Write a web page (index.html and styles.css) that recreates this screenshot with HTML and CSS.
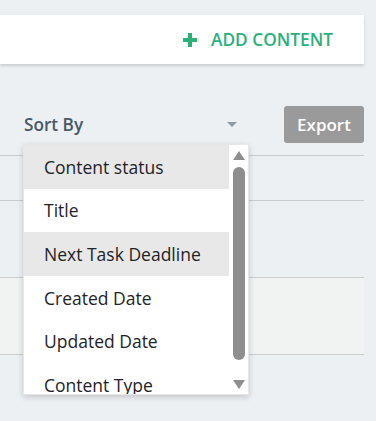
FILE: index.html
```html
<!DOCTYPE html>
<html lang="en">
<head>
    <meta charset="UTF-8">
    <meta name="viewport" content="width=device-width, initial-scale=1.0">
    <title>Content</title>
    <link rel="stylesheet" href="styles.css">
</head>
<body>
    <div class="page">
        <div class="toolbar">
            <a class="add-btn">
                <svg class="plus" width="14" height="14" viewBox="0 0 14 14">
                    <path d="M5 0h4v5h5v4H9v5H5V9H0V5h5z" fill="#2bb07c"/>
                </svg>
                <span>ADD CONTENT</span>
            </a>
        </div>

        <div class="list-area">
            <div class="filter-row">
                <div class="sort-select">
                    <span>Sort By</span>
                    <span class="caret"></span>
                </div>
                <button class="export-btn">Export</button>
            </div>

            <div class="table">
                <div class="row row-short"></div>
                <div class="row"></div>
                <div class="row row-alt"></div>
            </div>

            <!-- dropdown terbuka -->
            <div class="dropdown">
                <ul class="options">
                    <li class="hover">Content status</li>
                    <li>Title</li>
                    <li class="hover">Next Task Deadline</li>
                    <li>Created Date</li>
                    <li>Updated Date</li>
                    <li>Content Type</li>
                </ul>
                <div class="scrollbar">
                    <span class="arrow-up"></span>
                    <span class="thumb"></span>
                    <span class="arrow-down"></span>
                </div>
            </div>
        </div>
    </div>
</body>
</html>
```

FILE: styles.css
```css
* {
    margin: 0;
    padding: 0;
    box-sizing: border-box;
    font-family: "Open Sans", Arial, sans-serif;
}

body {
    background-color: #edf0f3;
    width: 376px;
    height: 421px;
    overflow: hidden;
}

.page {
    width: 364px;
    padding-top: 15px;
}

/* Toolbar */
.toolbar {
    background-color: #fff;
    height: 49px;
    display: flex;
    justify-content: flex-end;
    align-items: center;
    padding-right: 31px;
    box-shadow: 0 2px 3px rgba(0,0,0,0.15);
}

.add-btn {
    display: flex;
    align-items: center;
    gap: 14px;
    color: #2bb07c;
    font-size: 17.3px;
    font-weight: 600;
    text-decoration: none;
    cursor: pointer;
}

.add-btn span {
    line-height: 22px;
}

/* List */
.list-area {
    position: relative;
    margin-top: 42px;
}

.filter-row {
    display: flex;
    align-items: center;
    justify-content: space-between;
    padding-left: 24px;
    height: 37px;
}

.sort-select {
    display: flex;
    align-items: center;
    justify-content: space-between;
    width: 213px;
    color: #4a5866;
    font-size: 17.2px;
    font-weight: 600;
    margin-top: -1px;
}

.caret {
    width: 0;
    height: 0;
    border-left: 5px solid transparent;
    border-right: 5px solid transparent;
    border-top: 5px solid #8d9aa5;
    margin-top: 1px;
}

.export-btn {
    width: 80px;
    height: 37px;
    border: none;
    border-radius: 3px;
    background-color: #9a9a9a;
    color: #fff;
    font-size: 17px;
    font-weight: 600;
    cursor: pointer;
}

.table {
    margin-top: 12px;
    border-top: 1px solid #c9cbcd;
}

.row {
    height: 77px;
    border-bottom: 1px solid #c9cbcd;
}

.row-short {
    height: 45px;
}

.row-alt {
    background-color: #f1f2f2;
}

/* Dropdown */
.dropdown {
    position: absolute;
    left: 23px;
    top: 38px;
    width: 226px;
    height: 251px;
    background-color: #fff;
    display: flex;
    overflow: hidden;
    box-shadow: 0 2px 6px rgba(0,0,0,0.18);
    border: 1px solid #e4e6e8;
}

.options {
    list-style: none;
    flex: 1;
}

.options li {
    height: 43.6px;
    display: flex;
    align-items: center;
    padding-left: 20px;
    font-size: 17.5px;
    color: #1e2328;
}

.options li.hover {
    background-color: #e8e8e8;
}

.scrollbar {
    width: 19px;
    display: flex;
    flex-direction: column;
    align-items: center;
    padding: 6px 0 5px;
}

.arrow-up,
.arrow-down {
    width: 0;
    height: 0;
    border-left: 6px solid transparent;
    border-right: 6px solid transparent;
}

.arrow-up {
    border-bottom: 9px solid #8e8e8e;
}

.arrow-down {
    border-top: 9px solid #8e8e8e;
}

.thumb {
    width: 12px;
    flex: 1;
    margin: 7px 0 20px;
    background-color: #8e8e8e;
    border-radius: 6px;
}
```
